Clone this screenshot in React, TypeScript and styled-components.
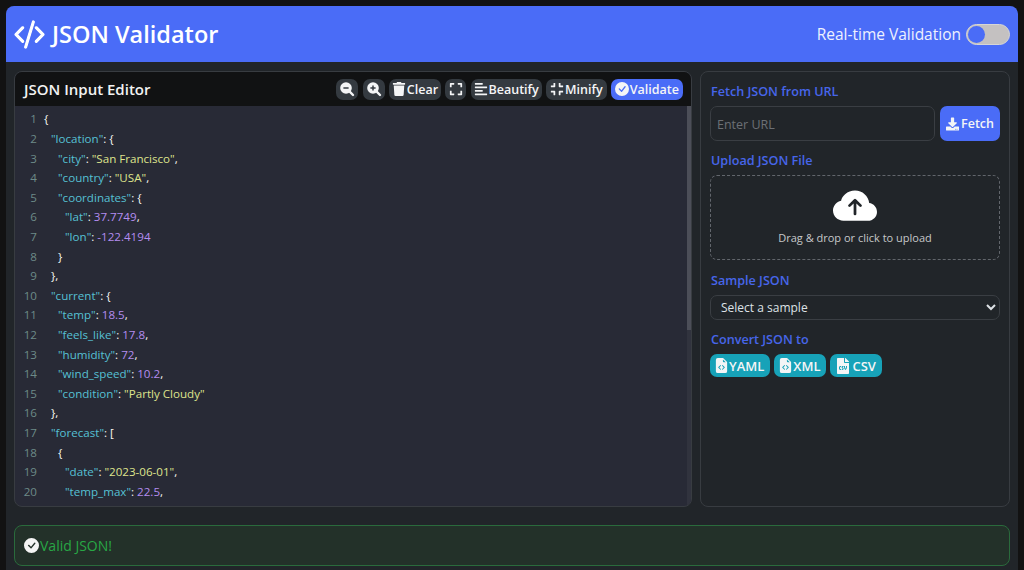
import React from "react";
import styled, { createGlobalStyle } from "styled-components";
import {
  FaExpand,
  FaAlignLeft,
  FaCompress,
  FaDownload,
  FaTrash,
  FaFileCsv,
} from "react-icons/fa";
import {
  BsCodeSlash,
  BsCheckCircleFill,
  BsCloudArrowUpFill,
  BsFileEarmarkCodeFill,
} from "react-icons/bs";

const FONT = `"Open Sans", "Noto Sans", "Liberation Sans", sans-serif`;

const Global = createGlobalStyle`
  html, body { margin: 0; padding: 0; height: 100%; background: #121212; overflow: hidden; }
  body { font-family: ${FONT}; }
  #root { height: 100%; }
  * { box-sizing: border-box; }
`;

const Page = styled.div`
  height: 570px;
  padding: 6px 6px 0;
  overflow: hidden;
`;

const Shell = styled.div`
  height: 564px;
  background: #212529;
  border-radius: 8px 8px 0 0;
  overflow: hidden;
  display: flex;
  flex-direction: column;
`;

const Header = styled.header`
  height: 56px;
  flex: none;
  background: #4a6cf7;
  color: #fff;
  padding: 0 8px;
  display: flex;
  align-items: center;
  justify-content: space-between;
`;

const Title = styled.h1`
  margin: 0;
  font-size: 23.5px;
  font-weight: 600;
  display: flex;
  align-items: center;
  gap: 7px;
`;

const ToggleLabel = styled.div`
  display: flex;
  align-items: center;
  gap: 5px;
  font-size: 15.5px;
  color: #eef1fe;
`;

const Toggle = styled.span`
  width: 44px;
  height: 21px;
  border-radius: 11px;
  background: #c4c1c1;
  border: 1px solid #d6d6d6;
  display: flex;
  align-items: center;
  padding-left: 1px;
`;

const Knob = styled.span`
  width: 17px;
  height: 17px;
  border-radius: 50%;
  background: #4a6cf7;
`;

const Main = styled.main`
  flex: none;
  display: flex;
  gap: 8px;
  padding: 9px 8px 0;
  height: 445px;
`;

const EditorCard = styled.section`
  width: 678px;
  flex: none;
  display: flex;
  flex-direction: column;
  border: 1px solid #383c41;
  border-radius: 8px;
  overflow: hidden;
  background: #282a36;
`;

const EditorHead = styled.div`
  height: 34px;
  flex: none;
  background: #111213;
  display: flex;
  align-items: center;
  justify-content: space-between;
  padding: 0 8px 0 9px;
`;

const EditorTitle = styled.h2`
  margin: 0;
  font-size: 15px;
  font-weight: 600;
  color: #f2f2f2;
`;

const Tools = styled.div`
  display: flex;
  gap: 4.2px;
  align-items: center;
`;

const ToolButton = styled.button<{ $primary?: boolean; $wide?: boolean }>`
  height: 21px;
  min-width: 21px;
  padding: 0 ${(p) => (p.$wide ? 4 : 3)}px;
  border: none;
  border-radius: 7px;
  background: ${(p) => (p.$primary ? "#4a6cf7" : "#343a40")};
  color: #f4f5f6;
  font-family: ${FONT};
  font-size: 12.5px;
  font-weight: 600;
  display: flex;
  align-items: center;
  justify-content: center;
  gap: 1px;
  svg { width: 14px; height: 14px; flex: none; }
`;

const ZoomSvg = styled.svg`
  && { width: 16px; height: 16px; }
`;

const EditorBody = styled.div`
  flex: 1;
  min-height: 0;
  display: flex;
  overflow: hidden;
`;

const Code = styled.div`
  flex: 1;
  min-width: 0;
  padding-top: 3.2px;
  overflow: hidden;
`;

const Line = styled.div`
  height: 19.6px;
  display: flex;
  align-items: center;
  font-size: 11.6px;
  color: #f8f8f2;
  white-space: pre;
`;

const LineNo = styled.span`
  width: 29px;
  flex: none;
  padding-right: 7px;
  text-align: right;
  color: #6d8a88;
`;

const LineText = styled.span<{ $level: number }>`
  padding-left: ${(p) => p.$level * 7}px;
`;

const Key = styled.span`
  color: #56c0d4;
`;
const Str = styled.span`
  color: #dfe48d;
`;
const Num = styled.span`
  color: #b48df0;
`;

const Track = styled.div`
  width: 4px;
  flex: none;
  background: #31333e;
`;

const Thumb = styled.div`
  height: 224px;
  background: #4c4e58;
`;

const SidePanel = styled.aside`
  flex: 1;
  min-width: 0;
  border: 1px solid #383c41;
  border-radius: 8px;
  padding: 10px 9px 10px 10px;
  display: flex;
  flex-direction: column;
`;

const SectionLabel = styled.div`
  font-size: 12.6px;
  font-weight: 600;
  line-height: 19px;
  color: #4766ea;
`;

const FetchRow = styled.div`
  display: flex;
  gap: 5px;
  margin: 5px 0 0 -1px;
`;

const UrlInput = styled.input`
  flex: 1;
  min-width: 0;
  height: 35px;
  background: #212529;
  border: 1px solid #3a3e43;
  border-radius: 7px;
  padding: 1px 6px 0;
  font-family: ${FONT};
  font-size: 12.5px;
  color: #fff;
  &::placeholder { color: #6c7075; }
`;

const FetchButton = styled.button`
  width: 60px;
  height: 35px;
  flex: none;
  border: none;
  border-radius: 7px;
  background: #4a6cf7;
  color: #f4f5f6;
  font-family: ${FONT};
  font-size: 12.5px;
  font-weight: 600;
  display: flex;
  align-items: center;
  justify-content: center;
  gap: 2px;
  svg { width: 14px; height: 14px; }
`;

const UploadLabel = styled(SectionLabel)`
  margin-top: 10px;
`;

const DropZone = styled.div`
  margin-top: 5px;
  height: 85px;
  margin-left: -1px;
  border: 1px dashed #62666c;
  border-radius: 7px;
  display: flex;
  flex-direction: column;
  align-items: center;
  justify-content: flex-start;
  color: #c6c8ca;
  font-size: 11px;
  padding-top: 9px;
`;

const DropIcon = styled(BsCloudArrowUpFill)`
  width: 44px;
  height: 44px;
  flex: none;
  color: #fff;
`;

const DropText = styled.div`
  margin-top: 1px;
  line-height: 15px;
`;

const SampleLabel = styled(SectionLabel)`
  margin-top: 11px;
`;

const Sample = styled.select`
  margin: 5px 0 0 -1px;
  height: 25px;
  width: calc(100% + 1px);
  background: #212529;
  border: 1px solid #3a3e43;
  border-radius: 7px;
  color: #dee2e6;
  font-family: ${FONT};
  font-size: 12px;
  padding: 0 6px;
`;

const ConvertLabel = styled(SectionLabel)`
  margin-top: 10px;
`;

const ConvertRow = styled.div`
  display: flex;
  gap: 4px;
  margin: 5px 0 0 -1px;
`;

const ConvertButton = styled.button`
  height: 23px;
  padding: 0 6px 0 4px;
  border: none;
  border-radius: 7px;
  background: #17a2b8;
  color: #f4f5f6;
  font-family: ${FONT};
  font-size: 13px;
  font-weight: 600;
  display: flex;
  align-items: center;
  svg { width: 15px; height: 15px; flex: none; }
`;

const CsvButton = styled(ConvertButton)`
  padding-left: 6px;
  gap: 2px;
`;

const CsvIcon = styled(FaFileCsv)`
  && { width: 14px; height: 16px; }
`;

const Status = styled.div`
  margin: 18px 8px 0;
  height: 41px;
  flex: none;
  background: #233129;
  border: 1px solid #2a6b3c;
  border-radius: 8px;
  padding: 0 9px;
  color: #28a745;
  font-size: 14px;
  display: flex;
  align-items: center;
  gap: 1px;
`;

const StatusIcon = styled(BsCheckCircleFill)`
  width: 15px;
  height: 15px;
  color: #f4f4f4;
`;

const ZoomIcon = ({ plus }: { plus?: boolean }) => (
  <ZoomSvg viewBox="0 0 16 16" aria-hidden="true">
    <path d="M10.2 10.2 14 14" stroke="#f4f5f6" strokeWidth="2.4" strokeLinecap="round" />
    <circle cx="7" cy="7" r="5.8" fill="#f4f5f6" />
    <path d="M4.4 7h5.2" stroke="#343a40" strokeWidth="1.5" />
    {plus && <path d="M7 4.4v5.2" stroke="#343a40" strokeWidth="1.5" />}
  </ZoomSvg>
);

type Tok = { t: "k" | "s" | "n" | "p"; v: string };
const k = (v: string): Tok => ({ t: "k", v });
const s = (v: string): Tok => ({ t: "s", v });
const n = (v: string): Tok => ({ t: "n", v });
const p = (v: string): Tok => ({ t: "p", v });

const LINES: { level: number; toks: Tok[] }[] = [
  { level: 0, toks: [p("{")] },
  { level: 1, toks: [k('"location"'), p(": {")] },
  { level: 2, toks: [k('"city"'), p(": "), s('"San Francisco"'), p(",")] },
  { level: 2, toks: [k('"country"'), p(": "), s('"USA"'), p(",")] },
  { level: 2, toks: [k('"coordinates"'), p(": {")] },
  { level: 3, toks: [k('"lat"'), p(": "), n("37.7749"), p(",")] },
  { level: 3, toks: [k('"lon"'), p(": "), n("-122.4194")] },
  { level: 2, toks: [p("}")] },
  { level: 1, toks: [p("},")] },
  { level: 1, toks: [k('"current"'), p(": {")] },
  { level: 2, toks: [k('"temp"'), p(": "), n("18.5"), p(",")] },
  { level: 2, toks: [k('"feels_like"'), p(": "), n("17.8"), p(",")] },
  { level: 2, toks: [k('"humidity"'), p(": "), n("72"), p(",")] },
  { level: 2, toks: [k('"wind_speed"'), p(": "), n("10.2"), p(",")] },
  { level: 2, toks: [k('"condition"'), p(": "), s('"Partly Cloudy"')] },
  { level: 1, toks: [p("},")] },
  { level: 1, toks: [k('"forecast"'), p(": [")] },
  { level: 2, toks: [p("{")] },
  { level: 3, toks: [k('"date"'), p(": "), s('"2023-06-01"'), p(",")] },
  { level: 3, toks: [k('"temp_max"'), p(": "), n("22.5"), p(",")] },
  { level: 3, toks: [k('"temp_min"'), p(": "), n("14.2"), p(",")] },
];

const Tk = ({ tok }: { tok: Tok }) => {
  if (tok.t === "k") return <Key>{tok.v}</Key>;
  if (tok.t === "s") return <Str>{tok.v}</Str>;
  if (tok.t === "n") return <Num>{tok.v}</Num>;
  return <>{tok.v}</>;
};

export default function App() {
  return (
    <Page>
      <Global />
      <Shell>
        <Header>
          <Title>
            <BsCodeSlash size={31} strokeWidth={0.6} />
            JSON Validator
          </Title>
          <ToggleLabel>
            Real-time Validation
            <Toggle>
              <Knob />
            </Toggle>
          </ToggleLabel>
        </Header>
        <Main>
          <EditorCard>
            <EditorHead>
              <EditorTitle>JSON Input Editor</EditorTitle>
              <Tools>
                <ToolButton aria-label="Zoom out"><ZoomIcon /></ToolButton>
                <ToolButton aria-label="Zoom in"><ZoomIcon plus /></ToolButton>
                <ToolButton><FaTrash />Clear</ToolButton>
                <ToolButton aria-label="Fullscreen"><FaExpand /></ToolButton>
                <ToolButton><FaAlignLeft />Beautify</ToolButton>
                <ToolButton $wide><FaCompress />Minify</ToolButton>
                <ToolButton $primary $wide><BsCheckCircleFill />Validate</ToolButton>
              </Tools>
            </EditorHead>
            <EditorBody>
              <Code>
                {LINES.map((l, i) => (
                  <Line key={i}>
                    <LineNo>{i + 1}</LineNo>
                    <LineText $level={l.level}>
                      {l.toks.map((tok, j) => (
                        <Tk key={j} tok={tok} />
                      ))}
                    </LineText>
                  </Line>
                ))}
              </Code>
              <Track>
                <Thumb />
              </Track>
            </EditorBody>
          </EditorCard>
          <SidePanel>
            <SectionLabel>Fetch JSON from URL</SectionLabel>
            <FetchRow>
              <UrlInput placeholder="Enter URL" />
              <FetchButton><FaDownload />Fetch</FetchButton>
            </FetchRow>
            <UploadLabel>Upload JSON File</UploadLabel>
            <DropZone>
              <DropIcon />
              <DropText>Drag &amp; drop or click to upload</DropText>
            </DropZone>
            <SampleLabel>Sample JSON</SampleLabel>
            <Sample defaultValue="">
              <option value="">Select a sample</option>
            </Sample>
            <ConvertLabel>Convert JSON to</ConvertLabel>
            <ConvertRow>
              <ConvertButton><BsFileEarmarkCodeFill />YAML</ConvertButton>
              <ConvertButton><BsFileEarmarkCodeFill />XML</ConvertButton>
              <CsvButton><CsvIcon />CSV</CsvButton>
            </ConvertRow>
          </SidePanel>
        </Main>
        <Status>
          <StatusIcon />
          Valid JSON!
        </Status>
      </Shell>
    </Page>
  );
}
